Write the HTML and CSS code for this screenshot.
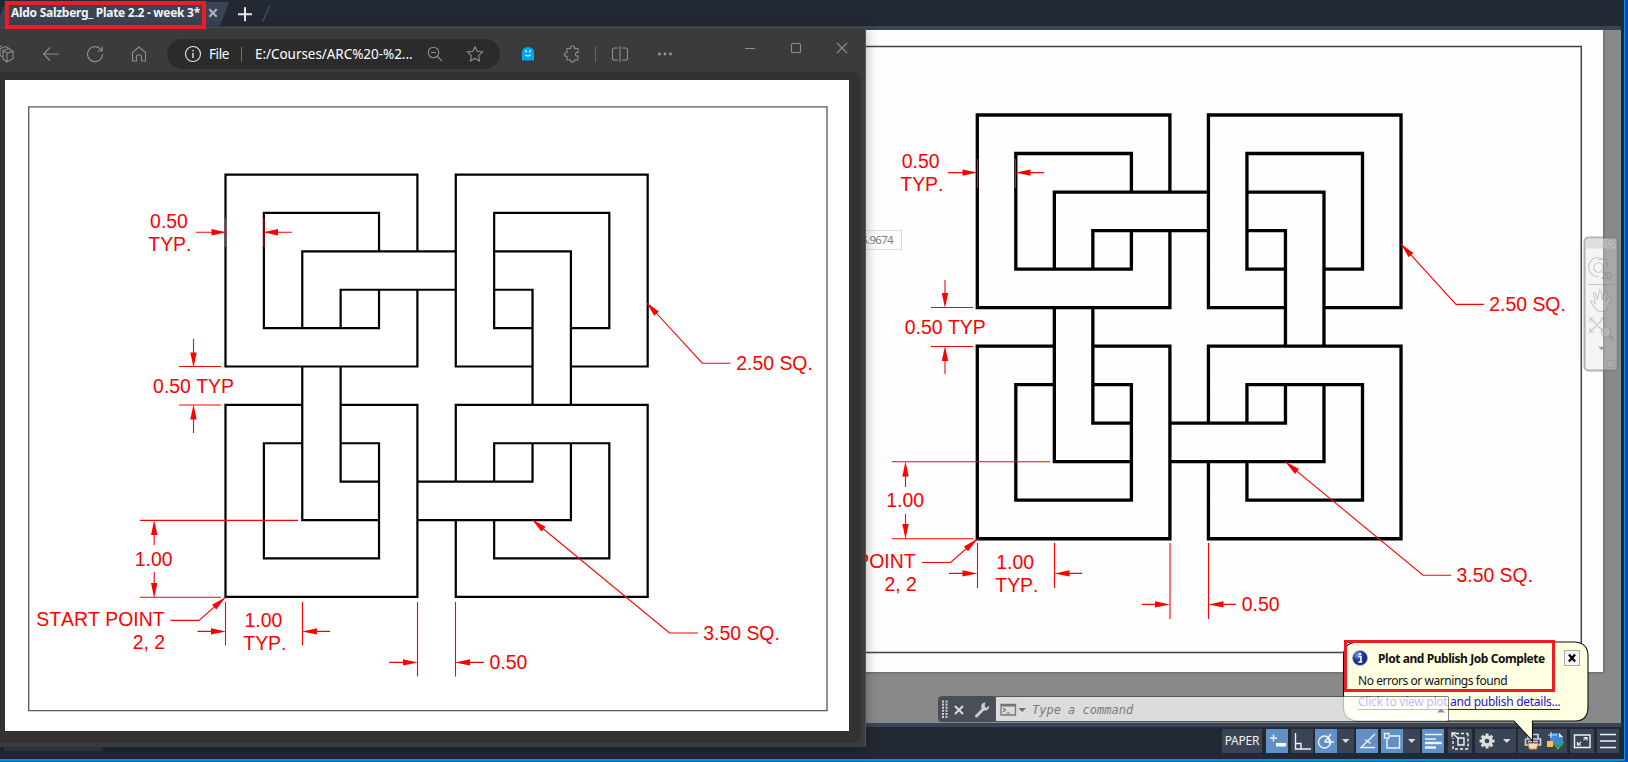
FILE: index.html
```html
<!DOCTYPE html>
<html lang="en">
<head>
<meta charset="utf-8">
<title>Aldo Salzberg_ Plate 2.2 - week 3*</title>
<link rel="stylesheet" href="styles.css">
</head>
<body>
<svg class="defs" width="0" height="0" aria-hidden="true">
  <defs>
    <!-- Interlaced knot on an 11 x 11 grid of 10 units -->
    <path id="knot" d="M0 0H50M0 0V50H50M50 0V20M50 30V50M10 10H40V20M40 30V40H10V10
      M20 40V20H60M30 40V30H60M70 20H90V60M70 30H80V60
      M60 0H110V50H90M80 50H60V0M70 10H100V40H90M80 40H70V10
      M20 50V90H40M30 50V80H40M50 80H80V70M50 90H90V70
      M20 60H0V110H50V60H30M20 70H10V100H40V70H30
      M60 80V60H110V110H60V90M70 80V70H100V100H70V90"/>
    <path id="head" d="M0 0L-15 -3.2V3.2Z"/>
  </defs>
</svg>
<div class="desktop">
  <main class="cad">
    <header class="tabs">
      <div class="tab"><span class="tab-title">Aldo Salzberg_ Plate 2.2 - week 3*</span>
        <svg class="tab-x" width="10" height="10" viewBox="0 0 10 10"><path d="M1.3 1.3L8.7 8.7M8.7 1.3L1.3 8.7"/></svg>
      </div>
      <svg class="tab-new" width="34" height="18" viewBox="0 0 34 18"><path class="plus" d="M0 9.200H14M7 2.200V16.200"/><path class="slash" d="M24.500 17L31.500 1"/></svg>
    </header>
    <section class="canvas">
      <div class="paper">
        <svg class="sheet" width="778" height="642" viewBox="825 30 778 642">
          <path class="frame heavy" d="M820 46.500H1581.300V652.500H820"/>
          <use class="knot thick" href="#knot" transform="translate(977.300 115) scale(3.852)"/>
          <g class="dim">
            <path d="M948 172.600H970M1044 172.600H1022M977.500 159V188M1015.500 159V188
              M931 307.500H973M931 346.500H973M945 280V300M945 374V354
              M892 461.800H1050M892 538.800H973M905.500 487V470M905.500 514V532
              M922 562.500H950.500L977.300 539M977.500 543V588M1054.500 543V588M949 573.400H970M1082 573.400H1062
              M1170 543V619M1208.500 543V619M1142 604.400H1163M1236 604.400H1215
              M1401 244L1456 304.400H1484M1285.500 461.800L1423 575.200H1451"/>
          </g>
          <g class="heads">
            <use href="#head" transform="translate(977.500 172.600)"/><use href="#head" transform="translate(1015.500 172.600) rotate(180)"/>
            <use href="#head" transform="translate(945 308) rotate(90)"/><use href="#head" transform="translate(945 346) rotate(-90)"/>
            <use href="#head" transform="translate(905.500 461.500) rotate(-90)"/><use href="#head" transform="translate(905.500 539) rotate(90)"/>
            <use href="#head" transform="translate(977.300 539) rotate(-41)"/>
            <use href="#head" transform="translate(977.500 573.400)"/><use href="#head" transform="translate(1054.500 573.400) rotate(180)"/>
            <use href="#head" transform="translate(1170 604.400)"/><use href="#head" transform="translate(1208.500 604.400) rotate(180)"/>
            <use href="#head" transform="translate(1401 244) rotate(228)"/><use href="#head" transform="translate(1285.500 461.800) rotate(220)"/>
          </g>
          <g class="labels">
            <text x="901" y="168">0.50</text><text x="899.500" y="191">TYP.</text>
            <text x="904" y="334">0.50 TYP</text>
            <text x="885.500" y="507">1.00</text>
            <text x="914.700" y="568" text-anchor="end">START POINT</text><text x="916" y="591" text-anchor="end">2, 2</text>
            <text x="995.500" y="569">1.00</text><text x="994.500" y="592">TYP.</text>
            <text x="1241" y="611">0.50</text>
            <text x="1488.500" y="311">2.50 SQ.</text><text x="1455.700" y="582">3.50 SQ.</text>
          </g>
        </svg>
      </div>
      <div class="coord">65.9674</div>
      <svg class="navbar" width="36" height="136" viewBox="1583 236 36 136">
        <rect class="nb-box" x="1584.500" y="237.500" width="33" height="133" rx="4"/>
        <path class="nb-head" d="M1586 239H1616V248.500H1586Z"/>
        <g class="nb-art">
          <circle cx="1611" cy="243" r="3.500"/><path d="M1609.500 241.500L1612.500 244.500M1612.500 241.500L1609.500 244.500"/>
          <path d="M1599 276.500A9.500 9.500 0 1 1 1607.500 267V259.500H1598"/><circle cx="1598.500" cy="267.500" r="4.800"/><path d="M1588 284.500H1614"/>
          <path d="M1596 309L1590.500 301.500Q1592 299.500 1595.500 304L1593.500 293Q1596 290.500 1597.500 300L1599.500 290Q1602 288.500 1602 300L1606 291Q1608.500 291 1605.500 302L1610 296Q1612.500 297 1608.500 304Q1606 312 1601 311.500Q1597.500 311.500 1596 309Z"/>
          <path d="M1590 318L1604 332M1604 318L1590 332M1590 322V318H1594M1600 318H1604V322M1590 328V332H1594"/>
          <circle cx="1606" cy="332" r="4.700"/><path class="nb-handle" d="M1609.500 335.500L1613 339.500"/>
          <path class="nb-tri" d="M1599 347H1604L1601.500 350Z"/>
          <circle cx="1611" cy="364" r="3.500"/><path d="M1609 363H1613M1609 365H1613"/>
        </g>
        <text x="1601.500" y="279">2D</text>
      </svg>
      <div class="balloon">
        <svg class="balloon-shape" width="250" height="104" viewBox="1341 640 250 104"><path d="M1357 642H1575Q1588 643 1588 656V707Q1588 721 1575 721H1532.500V741L1514 721H1357Q1343.500 720 1343.500 707V656Q1343.500 643 1357 642Z"/></svg>
        <div class="balloon-body">
          <div class="balloon-head">
            <svg width="16" height="16" viewBox="0 0 16 16"><defs><radialGradient id="info" cx=".35" cy=".3"><stop offset="0" stop-color="#7f9ee8"/><stop offset=".65" stop-color="#2343ad"/><stop offset="1" stop-color="#152c7d"/></radialGradient></defs><circle cx="8" cy="8" r="7.500" fill="url(#info)" stroke="#9eaac8" stroke-width=".7"/><path d="M6.300 6.400H8.900V11.800M6.200 12H10.400" fill="none" stroke="#fff" stroke-width="1.500"/><circle cx="8" cy="3.900" r="1.200" fill="#fff"/></svg>
            <b>Plot and Publish Job Complete</b>
            <svg class="balloon-x" width="16" height="16" viewBox="0 0 16 16"><path d="M4.500 4L11.500 12M11.500 4L4.500 12"/></svg>
          </div>
          <div class="balloon-msg">No errors or warnings found</div>
          <div class="balloon-link">Click to view plot and publish details...</div>
        </div>
      </div>
      <div class="command">
        <div class="command-grip">
          <svg width="57" height="26" viewBox="938 696 57 26"><path class="grip" d="M943 700.500V718M946.500 700.500V718"/><path class="cx" d="M955 706L963 714M963 706L955 714"/><path class="wr" d="M976.500 716L984.500 708"/><path class="wrh" d="M989 705.500A4 4 0 1 1 985.500 702.500L984.500 706.500L986.500 708Z"/></svg>
        </div>
        <div class="command-input">
          <svg width="28" height="14" viewBox="0 0 28 14"><path d="M1 1.500H15.500V12H1Z" fill="none" stroke="#777" stroke-width="1.300"/><path d="M1 2.500H15" stroke="#777" stroke-width="2"/><path d="M3 5L5.500 7L3 9M6.500 10H10" fill="none" stroke="#777" stroke-width="1.200"/><path d="M18.500 5H26L22.200 9Z" fill="#6f6f6f"/></svg>
          <span>Type a command</span>
          <svg class="up" width="8" height="5" viewBox="0 0 8 5"><path d="M0 4.500L4 .5L8 4.500Z"/></svg>
        </div>
      </div>
    </section>
    <footer class="status">
      <span class="st paper-btn">PAPER</span>
      <svg class="st on" viewBox="0 0 22 22"><path d="M4 8H11M7.500 4.500V11.500"/><path d="M10 13H20V16.500H10Z" fill="#fff" stroke="none"/></svg>
      <svg class="st" viewBox="0 0 22 22"><path d="M4.500 3V19H20M4.500 13.500H10V19"/></svg>
      <svg class="st on flush" viewBox="0 0 22 22"><circle cx="9.500" cy="12" r="6"/><path d="M9.500 12H19M9.500 12L16 4M13 8.500Q15 10 15 14.500"/></svg>
      <svg class="st arrow" viewBox="0 0 17 22"><path d="M5 9H12.500L8.700 13Z"/></svg>
      <svg class="st on" viewBox="0 0 22 22"><path d="M19 4L5 17.500H19"/><path d="M9 9.500L14.500 13.500"/></svg>
      <svg class="st on flush" viewBox="0 0 22 22"><path d="M6 9V18H18.500V6H9"/><path d="M3.500 3.500H8V8H3.500Z"/></svg>
      <svg class="st arrow" viewBox="0 0 17 22"><path d="M5 9H12.500L8.700 13Z"/></svg>
      <svg class="st on" viewBox="0 0 22 22"><path d="M3 4.500H20M3 9H14" stroke-width="1.500"/><path d="M3 13H20M3 17.500H14" stroke-width="2.700"/></svg>
      <svg class="st select" viewBox="0 0 24 22"><path d="M8 3.500H20M20 3.500V19M20 19H5M5 19V8" stroke-dasharray="3 2"/><path d="M10 8H16V15H10Z"/><path d="M4 3L11 9M4 7V3H8"/></svg>
      <svg class="st gear" viewBox="0 0 24 22"><circle cx="12" cy="11" r="4" stroke-width="3.300"/><path d="M12 3.500V6M12 16V18.500M4.500 11H7M17 11H19.500M6.700 5.700L8.400 7.400M15.600 14.600L17.300 16.300M6.700 16.300L8.400 14.600M15.600 7.400L17.300 5.700" stroke-width="3"/></svg>
      <svg class="st arrow" viewBox="0 0 17 22"><path d="M4 9H11.500L7.700 13Z"/></svg>
      <svg class="st printer" viewBox="-2 0 25 22"><path d="M8 9V4.500H18V9M5.500 9H20.500V15H18M8 15H5.500V9M8 11.500H18" stroke-width="1.700"/><path d="M8 13.500H18L16.500 19H9.500Z" fill="#ffd7b5" stroke="#e98f55" stroke-width="1"/></svg>
      <svg class="st sheetset" viewBox="0 0 24 22"><path d="M7 3H16L20 7V15H7Z" fill="#3e88cf" stroke="none"/><path d="M16 3V7H20Z" fill="#e6f0f9" stroke="none"/><path d="M4 11H10V17H4Z" fill="#ffc240" stroke="none"/><path d="M5 5H14M8 2V8" stroke="#c9ddf0" stroke-width="1.200"/><path d="M12 14.500L15 18L20.500 11.500" stroke="#34a747" stroke-width="2.500"/></svg>
      <svg class="st clean" viewBox="0 0 24 22"><path d="M4.500 5H20V17.500H4.500Z"/><path d="M13.500 10L17 7.500M13.500 7.500H17V10.500M11 12L7.500 15M7.500 12V15H11" stroke-width="1.200"/></svg>
      <svg class="st menu" viewBox="0 0 22 22"><path d="M3 4.500H19M3 11H19M3 17.500H19" stroke-width="1.700"/></svg>
    </footer>
  </main>

  <div class="undertab"></div>
  <section class="browser">
    <header class="toolbar">
      <svg class="t-work" width="17" height="18" viewBox="0 0 17 18"><path d="M10 8L16 6.500V13.500L10 17V8L6 5.500V14L10 17M6 5.500L12 3.500L16 6.500M6 12L3 10.500V3.500L9 1.500L12 3.500M3 9L0 7.500V2.500L5 .8"/></svg>
      <svg class="t-back" width="18" height="18" viewBox="0 0 18 18"><path d="M17 9H2M8 2.500L1.500 9L8 15.500"/></svg>
      <svg class="t-reload" width="18" height="18" viewBox="0 0 18 18"><path d="M16.500 9A7.500 7.500 0 1 1 14.300 3.800L16 5.500M16.200 1.500V6H11.500"/></svg>
      <svg class="t-home" width="16" height="18" viewBox="0 0 16 18"><path d="M1.500 16V7.500L8 2L14.500 7.500V16H10.500V11Q10.500 10 9.500 10H6.500Q5.500 10 5.500 11V16Z"/></svg>
      <div class="address">
        <svg class="a-info" width="18" height="18" viewBox="0 0 18 18"><circle cx="9" cy="9" r="7.500"/><path d="M9 8V13M9 5V6.500" stroke-width="1.400"/></svg>
        <span class="a-file">File</span><i></i><span class="a-url">E:/Courses/ARC%20-%2...</span>
        <svg class="a-zoom" width="16" height="16" viewBox="0 0 16 16"><circle cx="6.500" cy="6.500" r="5.300"/><path d="M4 6.500H9M10.500 10.500L15 15"/></svg>
        <svg class="a-star" width="18" height="18" viewBox="0 0 18 18"><path d="M9 1.700L11.200 6.300L16.500 7L12.600 10.600L13.600 15.900L9 13.400L4.400 15.900L5.400 10.600L1.500 7L6.800 6.300Z"/></svg>
      </div>
      <svg class="t-ghost" width="14" height="16" viewBox="0 0 14 16"><path class="g-body" d="M1 15V7Q1 1 7 1Q13 1 13 7V15L10 14L7 15L4 14Z"/><path class="g-face" d="M5 4V6.500M9 4V6.500M4.500 9Q7 11 9.500 9"/></svg>
      <svg class="t-puzzle" width="18" height="18" viewBox="0 0 18 18"><path d="M6 3.500H7.500Q7 1 9.500 1Q12 1 11.500 3.500H15V7.500Q12.500 7 12.500 9.300Q12.500 11.500 15 11V15H11.500Q11.500 17 9.500 17Q7.500 17 7.500 15H4V11.500Q1.500 11.500 1.500 9.500Q1.500 7.500 4 7.500V3.500Z"/></svg>
      <i class="t-sep"></i>
      <svg class="t-split" width="18" height="18" viewBox="0 0 18 18"><path d="M9 1V17M7 3H3.500Q1.500 3 1.500 5V13Q1.500 15 3.500 15H7M11 3H14.500Q16.500 3 16.500 5V13Q16.500 15 14.500 15H11"/></svg>
      <svg class="t-dots" width="16" height="4" viewBox="0 0 16 4"><circle cx="2.500" cy="2" r="1.400"/><circle cx="8" cy="2" r="1.400"/><circle cx="13.500" cy="2" r="1.400"/></svg>
      <svg class="t-win" width="104" height="12" viewBox="0 0 104 12"><path d="M1 6.500H11M93 1L103 11M103 1L93 11"/><rect x="47.500" y="1.500" width="9" height="9" rx="1"/></svg>
    </header>
    <div class="viewer">
      <div class="page">
        <svg class="sheet" width="844" height="651" viewBox="5 80 844 651">
          <path class="frame" d="M28.700 106.900H827V710.700H28.700Z"/>
          <use class="knot" href="#knot" transform="translate(225.500 174.600) scale(3.838)"/>
          <g class="dim">
            <path d="M196 232.200H218M292 232.200H270M225.500 218V247M264 218V247
              M179 366.500H221M179 405H221M193.500 339V359M193.500 433V413
              M140 520.400H298M140 597.200H221M154.200 545V528M154.200 572V590
              M170.500 620.400H199L225.500 597.200M225.500 602V645.500M302.500 602V645.500M197.500 631.400H218M330 631.400H310
              M417.500 602V676.500M455.500 602V676.500M389 662.400H410M484 662.400H463
              M647 303L702.300 363.200H730.500M532.500 520L669.500 633H698"/>
          </g>
          <g class="heads">
            <use href="#head" transform="translate(226.500 232.200)"/><use href="#head" transform="translate(263 232.200) rotate(180)"/>
            <use href="#head" transform="translate(193.500 367.500) rotate(90)"/><use href="#head" transform="translate(193.500 404.500) rotate(-90)"/>
            <use href="#head" transform="translate(154.200 520) rotate(-90)"/><use href="#head" transform="translate(154.200 598) rotate(90)"/>
            <use href="#head" transform="translate(225.500 597.200) rotate(-41)"/>
            <use href="#head" transform="translate(226 631.400)"/><use href="#head" transform="translate(302 631.400) rotate(180)"/>
            <use href="#head" transform="translate(418 662.400)"/><use href="#head" transform="translate(455 662.400) rotate(180)"/>
            <use href="#head" transform="translate(646.500 302.500) rotate(228)"/><use href="#head" transform="translate(532 519.500) rotate(220)"/>
          </g>
          <g class="labels">
            <text x="149.300" y="228">0.50</text><text x="147.500" y="251">TYP.</text>
            <text x="152.300" y="393">0.50 TYP</text>
            <text x="134" y="566">1.00</text>
            <text x="163.700" y="626" text-anchor="end">START POINT</text><text x="164.200" y="649" text-anchor="end">2, 2</text>
            <text x="243.700" y="627">1.00</text><text x="242.500" y="650">TYP.</text>
            <text x="488.700" y="669">0.50</text>
            <text x="735.500" y="370">2.50 SQ.</text><text x="702.500" y="640">3.50 SQ.</text>
          </g>
        </svg>
      </div>
    </div>
  </section>
  <div class="mark mark-tab"></div>
  <div class="mark mark-balloon"></div>
</div>
</body>
</html>
```

FILE: styles.css
```css
*, *::after { box-sizing: border-box; }
body { margin: 0; font-family: "Noto Sans", "Open Sans", sans-serif; }
svg { display: block; flex: none; }
.defs { position: absolute; }
.desktop {
  position: relative; width: 1628px; height: 762px; overflow: hidden;
  background: #0b40bf; padding: 0 4px 3px 0;
}
.cad {
  display: grid; grid-template-rows: 26px 701px 32px; height: 759px;
  background: #222933;
}
.desktop::after {
  content: ""; position: absolute; left: 0; top: 0; width: 1625px; height: 761px;
  border: solid #0294e3; border-width: 0 1px 2px 0; pointer-events: none;
}

/* Document tabs */
.tabs { display: flex; background: #222933; }
.tab {
  display: flex; align-items: center; width: 229px; height: 26px; padding-left: 11px; gap: 8px;
  background: #3b4454; clip-path: polygon(6px 2px, 100% 2px, 220px 100%, 0 100%, 0 16px);
}
.tab-title { width: 189px; color: #f3f3f3; font: 700 12px/26px "Noto Sans", sans-serif; letter-spacing: -.28px; white-space: nowrap; }
.tab-x { fill: none; stroke: #b1b5bd; stroke-width: 2; }
.tab-new { margin: 5px 0 0 9px; fill: none; }
.plus { stroke: #e3e5e8; stroke-width: 2; }
.slash { stroke: #4b515d; stroke-width: 1.2; }

/* Drawing area */
.canvas {
  position: relative; width: 1621px; background: #898989;
  border: solid #3b4454; border-width: 4px 0;
}
.paper { width: 1603px; height: 642px; padding-left: 825px; background: #fefefe; box-shadow: 1px 1px 2px #666; }
.sheet { overflow: visible; }
.frame { fill: none; stroke: #555; stroke-width: 1.3; }
.heavy { stroke: #444; stroke-width: 1.5; }
.knot { fill: none; stroke: #000; stroke-width: .58px; stroke-linecap: square; }
.thick { stroke-width: .86px; }
.dim { fill: none; stroke: #f00; stroke-width: 1.1; }
.heads { fill: #f00; }
.labels { fill: #f00; font: 19.4px "Liberation Sans", Arial, sans-serif; font-kerning: none; transform: translate(.8px, 0); }
.coord {
  position: absolute; left: 838px; top: 200px; width: 64px; height: 20px; padding-right: 8px;
  border: 1px solid #ddd; background: #fdfdfd; color: #7e7e7e; font-size: 11.5px; line-height: 18px;
  text-align: right; letter-spacing: -.7px;
}
.navbar { position: absolute; left: 1583px; top: 206px; }
.nb-box { fill: rgba(225,225,225,.35); stroke: rgba(110,110,110,.5); stroke-width: 2; }
.nb-head { fill: rgba(200,200,200,.5); }
.nb-art { fill: rgba(255,255,255,.15); stroke: rgba(125,125,125,.38); stroke-width: 1.1; }
.nb-handle { stroke-width: 3; }
.nb-tri { fill: #aaa; }
.navbar text { font: 8px "Noto Sans", sans-serif; fill: #8095a3; }

/* Plot notification */
.balloon { position: absolute; left: 1341px; top: 610px; width: 250px; height: 104px; }
.balloon-shape { position: absolute; left: 0; top: 0; fill: #ffffe1; stroke: #111; stroke-width: 1.1; }
.balloon-body { position: relative; color: #111; padding: 10px 7px 0 11px; font-size: 12px; }
.balloon-head { display: flex; align-items: center; height: 16px; }
.balloon-head b { margin-left: 10px; width: 186px; font-size: 12px; letter-spacing: -.43px; white-space: nowrap; }
.balloon-x { border: 1px solid #a7a7a7; background: #f4f4f4; stroke: #000; stroke-width: 2.6; }
.balloon-msg { margin: 6px 0 0 6px; line-height: 17px; letter-spacing: -.45px; }
.balloon-link { display: inline-block; margin: 4px 0 0 6px; height: 17px; line-height: 17px; color: #2311ee; border-bottom: 1px solid #2311ee; letter-spacing: -.27px; white-space: nowrap; }

/* Command line */
.command { position: absolute; left: 938px; top: 666px; display: flex; width: 511px; height: 26px; }
.command-grip { width: 57px; background: #4a4e57; border-radius: 4px 0 0 4px; fill: none; }
.grip { stroke: #d0d2d5; stroke-width: 2; stroke-dasharray: 2 1.1; }
.cx { stroke: #dadada; stroke-width: 2; }
.wr { stroke: #ccc; stroke-width: 3; stroke-linecap: round; }
.wrh { fill: #ccc; }
.command-input {
  display: flex; align-items: center; flex: 1; padding: 1px 3px 0 4px; background: rgba(255,255,255,.7);
  border: 1px solid rgba(60,60,60,.65); border-radius: 2px; background-clip: padding-box;
  font: italic 12px "DejaVu Sans Mono", monospace; color: #7b7b7b;
}
.command-input span { margin-left: 4px; }
.up { margin: 0 0 -1px auto; fill: #8f8f8f; }

/* Status bar */
.status { display: flex; width: 1621px; padding: 2px 2px 0 1222px; background: #222933; }
.st { width: 22px; height: 24px; margin-right: 2px; background: #3b4454; fill: none; stroke: #eef1f5; stroke-width: 1.4; }
.on { background: #6190c5; margin-right: 3px; }
.paper-btn { width: 40px; margin-right: 4px; color: #f0f2f5; font-size: 12px; line-height: 24px; text-align: center; letter-spacing: -.2px; }
.flush { margin-right: 0; }
.arrow { width: 17px; fill: #d9dce1; stroke: none; }
.select { width: 24px; margin: 0 3px 0 1px; }
.gear { width: 24px; margin-right: 0; stroke: #dedede; }
.printer { width: 25px; margin-right: 0; stroke: #cfcfcf; }
.sheetset { width: 24px; margin-right: 3px; }
.clean { width: 24px; margin-right: 3px; }
.menu { margin-right: 0; }

/* Browser window */
.undertab { position: absolute; left: 4px; top: 740px; width: 100px; height: 11px; background: #343b49; clip-path: polygon(0 0, 100% 0, 98% 100%, 0 100%); }
.browser {
  position: absolute; left: 0; top: 27px; display: flex; flex-direction: column; width: 866px; height: 720px;
  background: #3b3b3b; border-top: 1px solid #474b52; border-right: 1px solid #555; box-shadow: 0 2px 12px rgba(0,0,0,.32);
}
.toolbar { display: flex; align-items: center; height: 44px; padding-top: 8px; fill: none; stroke: #8d8d8d; stroke-width: 1.1; }
.t-work { margin-left: -3px; }
.t-back { margin-left: 28px; }
.t-reload { margin-left: 26px; }
.t-home { margin-left: 27px; }
.address {
  display: flex; align-items: center; width: 333px; height: 30px; margin-left: 20px; border-radius: 15px;
  background: #2b2b2b; color: #fff; font-size: 13.500px;
}
.a-info { margin-left: 17px; stroke: #e5e5e5; }
.a-file { width: 22px; margin-left: 7px; letter-spacing: -.4px; }
.address i { width: 1px; height: 15px; margin: 0 13px 0 10px; background: #707070; }
.a-url { width: 158px; letter-spacing: -.05px; white-space: nowrap; }
.a-zoom { margin-left: 14px; }
.a-star { margin-left: 23px; }
.t-ghost { margin-left: 21px; }
.g-body { fill: #00a8f3; stroke: none; }
.g-face { stroke: #fff; }
.t-puzzle { margin-left: 28px; }
.t-sep { width: 1px; height: 16px; margin: 0 15px 0 14px; background: #666; }
.t-dots { margin-left: 28px; fill: #999; stroke: none; }
.t-win { margin: -12px 0 0 71px; }
.viewer { flex: 1; margin-right: 4px; margin-bottom: 4px; padding: 8px 0 0 5px; background: #323232; border-radius: 0 8px 8px 0; }
.page { width: 844px; height: 651px; background: #fff; }

/* Red highlights */
.mark { position: absolute; border: 4px solid #ed1c24; }
.mark-tab { left: 5px; top: 1px; width: 201px; height: 28px; }
.mark-balloon { left: 1344px; top: 640px; width: 211px; height: 52px; border-width: 3px; }
```
